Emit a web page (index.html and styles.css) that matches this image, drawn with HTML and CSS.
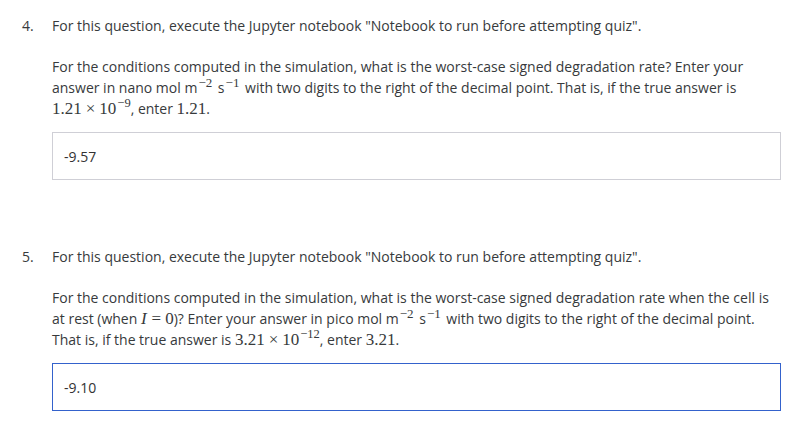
FILE: index.html
```html
<!DOCTYPE html>
<html>
<head>
<meta charset="utf-8">
<link rel="stylesheet" href="styles.css">
</head>
<body>
<ol class="quiz" start="4">
  <li class="question">
    <span class="num">4.</span>
    <div class="qbody">
      <p class="lead">For this question, execute the Jupyter notebook "Notebook to run before attempting quiz".</p>
      <p class="para">For the conditions computed in the simulation, what is the worst-case signed degradation rate? Enter your answer in nano mol m<sup class="m">−2</sup> s<sup class="m">−1</sup> with two digits to the right of the decimal point. That is, if the true answer is <span class="math">1.21<span class="op">×</span>10<sup>−9</sup></span>, enter <span class="math">1.21</span>.</p>
      <div class="answer">-9.57</div>
    </div>
  </li>
  <li class="question q5">
    <span class="num">5.</span>
    <div class="qbody">
      <p class="lead">For this question, execute the Jupyter notebook "Notebook to run before attempting quiz".</p>
      <p class="para">For the conditions computed in the simulation, what is the worst-case signed degradation rate when the cell is at rest (when <span class="math"><i>I</i><span class="op">=</span>0</span>)? Enter your answer in pico mol m<sup class="m">−2</sup> s<sup class="m">−1</sup> with two digits to the right of the decimal point. That is, if the true answer is <span class="math">3.21<span class="op">×</span>10<sup>−12</sup></span>, enter <span class="math">3.21</span>.</p>
      <div class="answer focused">-9.10</div>
    </div>
  </li>
</ol>
</body>
</html>
```
FILE: styles.css
```css
html, body {
  margin: 0;
  padding: 0;
  background: #fff;
}
body {
  font-family: "Open Sans", "Liberation Sans", sans-serif;
  font-size: 14px;
  color: #373a3c;
  width: 811px;
  height: 430px;
  overflow: hidden;
}
.quiz {
  list-style: none;
  margin: 0;
  padding: 15px 30px 0 22px;
}
.question {
  display: flex;
}
.q5 {
  margin-top: 66px;
}
.num {
  width: 30px;
  flex: none;
  line-height: 21px;
}
.qbody {
  flex: 1;
}
.lead, .para {
  margin: 0;
  line-height: 21px;
}
.lead {
  margin-bottom: 20px;
}
.para {
  margin-bottom: 13px;
}
sup {
  line-height: 0;
}
sup.m {
  font-family: "Liberation Serif", "DejaVu Serif", serif;
  font-size: 13px;
  vertical-align: 6px;
  margin-left: 1px;
  padding-right: 2px;
}
.math {
  font-family: "Liberation Serif", "DejaVu Serif", serif;
  font-size: 17px;
  line-height: 0;
  white-space: nowrap;
  color: #373a3c;
}
.math .op {
  margin: 0 4px;
}
.math sup {
  font-size: 12.5px;
  vertical-align: 7px;
  margin-left: 1px;
}
.math i {
  font-style: italic;
  margin-right: 1px;
}
.answer {
  height: 46px;
  border: 1px solid #cfcfd6;
  display: flex;
  align-items: center;
  padding: 0 11px;
  font-family: "Open Sans", sans-serif;
  font-size: 14px;
  color: #333;
}
.answer.focused {
  border-color: #3462cc;
}
```
